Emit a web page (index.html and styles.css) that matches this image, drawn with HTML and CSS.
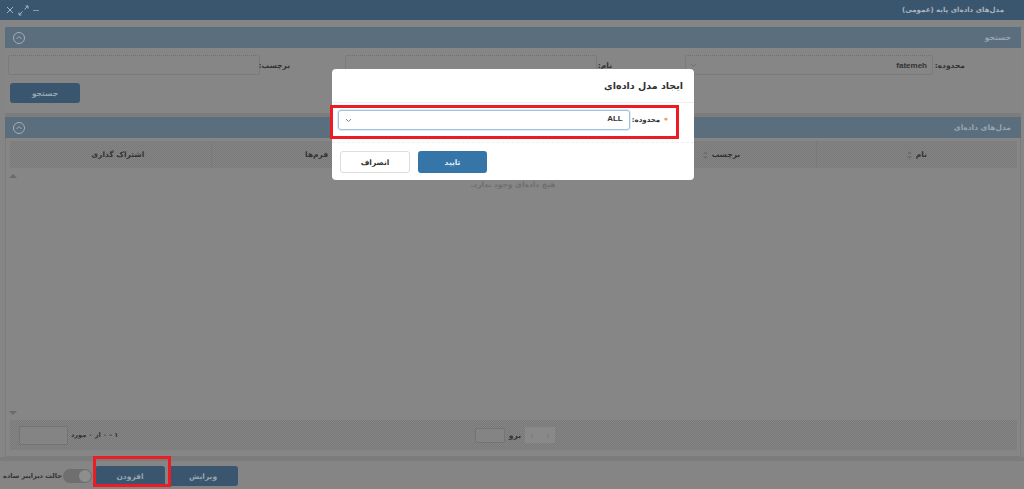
FILE: index.html
```html
<!DOCTYPE html>
<html lang="fa" dir="rtl">
<head>
<meta charset="utf-8">
<title>مدل‌های داده‌ای پایه</title>
<link rel="stylesheet" href="styles.css">
</head>
<body>
<div class="app">
  <header class="titlebar">
    <span class="title">مدل‌های داده‌ای پایه (عمومی)</span>
    <div class="winctl">
      <svg width="9" height="9" viewBox="0 0 9 9"><path d="M1 4.500h6" stroke="#8b9aa8" stroke-width="1"/></svg>
      <svg width="11" height="11" viewBox="0 0 11 11" fill="none" stroke="#a9b4be" stroke-width="1"><path d="M6.500 4.500 10 1M7.500 1H10V3.500M4.500 6.500 1 10M1 7.500V10H3.500"/></svg>
      <svg width="9" height="9" viewBox="0 0 9 9" fill="none" stroke="#a9b4be" stroke-width="1"><path d="M1 1l6 6M7 1l-6 6"/></svg>
    </div>
  </header>

  <section class="panel search">
    <div class="panel-head">
      <span>جستجو</span>
      <svg class="collapse" width="14" height="14" viewBox="0 0 14 14" fill="none" stroke="#a3aeb8"><circle cx="7" cy="7" r="5.500"/><path d="M4.500 8 7 5.500 9.500 8"/></svg>
    </div>
    <div class="panel-body search-body">
      <div class="fields">
        <div class="field f-scope">
          <label>محدوده:</label>
          <div class="input"><span class="val">fatemeh</span><svg width="7" height="5" viewBox="0 0 7 5" fill="none" stroke="#6f6f6f"><path d="M1 1l2.500 2.500L6 1"/></svg></div>
        </div>
        <div class="field f-name">
          <label>نام:</label>
          <div class="input"></div>
        </div>
        <div class="field f-tag">
          <label>برچسب:</label>
          <div class="input"></div>
        </div>
      </div>
      <div class="search-actions"><button class="btn dark">جستجو</button></div>
    </div>
  </section>

  <section class="panel models">
    <div class="panel-head">
      <span>مدل‌های داده‌ای</span>
      <svg class="collapse" width="14" height="14" viewBox="0 0 14 14" fill="none" stroke="#a3aeb8"><circle cx="7" cy="7" r="5.500"/><path d="M4.500 8 7 5.500 9.500 8"/></svg>
    </div>
    <div class="panel-body table-body">
      <div class="thead">
        <div class="th"><span>نام</span><svg width="5" height="8" viewBox="0 0 5 8" fill="#6e6e6e"><path d="M2.500 0 5 3H0zM2.500 8 0 5h5z"/></svg></div>
        <div class="th th-tag"><span>برچسب</span><svg width="5" height="8" viewBox="0 0 5 8" fill="#6e6e6e"><path d="M2.500 0 5 3H0zM2.500 8 0 5h5z"/></svg></div>
        <div class="th"></div>
        <div class="th th-forms"><span>فرم‌ها</span></div>
        <div class="th th-share"><span>اشتراک گذاری</span></div>
      </div>
      <div class="tbody">
        <div class="scrollcol"><i class="up"></i><i class="down"></i></div>
        <p class="empty">هیچ داده‌ای وجود ندارد.</p>
      </div>
      <div class="pager">
        <div class="pager-go">
          <span class="nav">‹&nbsp;&nbsp;&nbsp;&nbsp;›</span>
          <span class="go">برو</span>
          <span class="pgbox"></span>
        </div>
        <div class="pager-count">
          <span>۱ - ۰ از ۰ مورد</span>
          <span class="pgbox size"></span>
        </div>
      </div>
    </div>
  </section>

  <footer class="bottombar">
    <button class="btn dark">ویرایش</button>
    <button class="btn dark">افزودن</button>
    <span class="toggle"><i></i></span>
    <span class="toggle-label">حالت دیزاینر ساده</span>
  </footer>
</div>

<div class="redbox red-add"></div>

<div class="modal">
  <div class="modal-head">ایجاد مدل داده‌ای</div>
  <div class="modal-body">
    <span class="req">*</span>
    <label>محدوده:</label>
    <div class="select">
      <span>ALL</span>
      <svg width="7" height="5" viewBox="0 0 7 5" fill="none" stroke="#888"><path d="M1 1l2.500 2.500L6 1"/></svg>
    </div>
  </div>
  <div class="modal-foot">
    <button class="btn primary">تایید</button>
    <button class="btn ghost">انصراف</button>
  </div>
</div>
<div class="redbox red-scope"></div>
</body>
</html>
```
FILE: styles.css
```css
* { box-sizing: border-box; }
html, body { margin: 0; height: 489px; overflow: hidden; }
body {
  background: #858585;
  font-family: "DejaVu Sans", "Noto Sans", sans-serif;
  font-size: 7.500px;
  color: #2e2e2e;
  position: relative;
}
.app { display: flex; flex-direction: column; height: 489px; }

.titlebar {
  height: 20px;
  background: #3a566f;
  display: flex;
  align-items: center;
  justify-content: space-between;
  padding: 0 20px 0 6px;
  color: #a9b4be;
  font-weight: bold;
  flex: none;
}
.title { font-size: 7px; }
.winctl { display: flex; align-items: center; gap: 3px; }

.panel { margin: 0 3px 0 5px; flex: none; }
.panel-head {
  height: 21px;
  background: #5a6e7e;
  color: #98a5b0;
  display: flex;
  align-items: center;
  justify-content: space-between;
  padding: 0 10px 0 7px;
  font-weight: bold;
}
.panel-body { background: #868686; }

.search { margin-top: 7px; }
.search-body { height: 65px; padding: 7px 3px 0; }
.fields { display: flex; height: 20px; align-items: center; }
.field { display: flex; align-items: center; height: 20px; }
.field label { font-weight: bold; color: #333; white-space: nowrap; flex: none; }
.input {
  flex: 1;
  height: 20px;
  border: 1px dotted #707070;
  border-radius: 3px;
  display: flex;
  align-items: center;
  justify-content: space-between;
  padding: 0 5px 0 4px;
}
.val { font-family: "Liberation Sans", sans-serif; font-weight: bold; color: #333; font-size: 8px; }
.f-scope { width: 333px; }
.f-scope label { width: 85px; padding-right: 53px; }
.f-name { width: 340px; }
.f-name label { width: 88px; padding-right: 73px; }
.f-tag { flex: 1; }
.f-tag label { width: 85px; padding-right: 55px; }
.search-actions { margin-top: 8px; display: flex; justify-content: flex-end; padding-left: 2px; }

.btn {
  width: 70px;
  height: 20px;
  border-radius: 3px;
  border: 0;
  font: bold 7.500px "DejaVu Sans", sans-serif;
  padding: 0;
}
.btn.dark { background: #3a566f; color: #98a5b0; }
.btn.primary { background: #3575a8; color: #e4edf4; width: 69px; }
.btn.ghost { background: #fff; border: 1px solid #ddd; color: #333; }

.models { margin-top: 4px; box-shadow: 0 -4px 0 #7c7c7c; }
.table-body {
  height: 319px;
  display: flex;
  flex-direction: column;
  border: solid #7c7c7c;
  border-width: 0 1px 1px;
}
.thead {
  height: 27px;
  margin: 3px 3px 0 4px;
  display: grid;
  grid-template-columns: repeat(5, 1fr);
  background: conic-gradient(#787878 25%, #868686 0 50%, #787878 0 75%, #868686 0) 0 0 / 2px 2px;
  flex: none;
}
.th {
  display: flex;
  align-items: center;
  justify-content: center;
  gap: 4px;
  font-weight: bold;
  color: #333;
  border-left: 1px solid #7a7a7a;
}
.th-tag { padding-left: 12px; }
.th-forms { padding-left: 8px; }
.th-share { border-left: 0; padding-left: 14px; }
.tbody { flex: 1; position: relative; display: block; }
.scrollcol {
  position: absolute;
  left: 3px;
  top: 6px;
  bottom: 5px;
  display: flex;
  flex-direction: column;
  justify-content: space-between;
}
.up { width: 0; height: 0; border: 4px solid transparent; border-top: 0; border-bottom: 4px solid #6b6b6b; }
.down { width: 0; height: 0; border: 4px solid transparent; border-bottom: 0; border-top: 4px solid #6b6b6b; }
.empty { margin: 12px 0 0; text-align: center; color: #6f6f6f; font-weight: bold; }

.pager {
  height: 30px;
  flex: none;
  margin: 0 3px 6px 4px;
  display: flex;
  justify-content: space-between;
  align-items: center;
  background: conic-gradient(#787878 25%, #868686 0 50%, #787878 0 75%, #868686 0) 0 0 / 2px 2px;
  padding: 0 462px 0 9px;
}
.pager-go, .pager-count { display: flex; align-items: center; }
.pager-go { gap: 4px; }
.pager-count { gap: 3px; font-weight: bold; color: #333; font-size: 6.500px; }
.nav { background: #898989; color: #777; width: 30px; height: 16px; display: flex; align-items: center; justify-content: center; font-size: 10px; }
.go { font-weight: bold; color: #333; }
.pgbox { width: 30px; height: 15px; border: 1px solid #747474; border-radius: 2px; display: block; background: #848484; flex: none; }
.pgbox.size { width: 49px; height: 19px; }

.bottombar {
  flex: 1;
  display: flex;
  align-items: center;
  gap: 3px;
  border-top: 4px solid #7c7c7c;
  padding: 2px 786px 0 0;
}
.bottombar .btn { flex: none; }
.toggle {
  width: 29px;
  height: 14px;
  background: #6f6f6f;
  border-radius: 7px;
  position: relative;
  flex: none;
}
.toggle i { position: absolute; left: 16px; top: 1px; width: 12px; height: 12px; border-radius: 50%; background: #8e8e8e; }
.toggle-label { font-weight: bold; color: #333; white-space: nowrap; font-size: 6.600px; margin-right: -2px; }

.modal {
  position: absolute;
  left: 332px;
  top: 69px;
  width: 362px;
  height: 111px;
  background: #fff;
  border-radius: 4px;
  display: flex;
  flex-direction: column;
  color: #333;
}
.modal-head {
  height: 34px;
  padding: 0 11px;
  display: flex;
  align-items: center;
  font-size: 9.500px;
  font-weight: bold;
  border-bottom: 1px solid #f0f0f0;
  flex: none;
}
.modal-body {
  height: 40px;
  display: flex;
  align-items: center;
  padding: 0 26px 5px 6px;
  gap: 2px;
  border-bottom: 1px dashed #eee;
  flex: none;
  font-weight: bold;
}
.req { color: #f0883a; margin-left: 2px; }
.modal-body label { white-space: nowrap; font-size: 7px; }
.select {
  flex: 1;
  height: 20px;
  border: 1px solid #9fc2e0;
  border-radius: 3px;
  box-shadow: 0 0 0 1px #e0ecf6;
  display: flex;
  align-items: center;
  justify-content: space-between;
  padding: 0 6px 4px 6px;
  font-family: "Liberation Sans", sans-serif;
  font-weight: bold;
  font-size: 8px;
}
.select svg { margin-top: 4px; }
.modal-foot {
  flex: 1;
  display: flex;
  gap: 8px;
  align-items: center;
  padding: 1px 207px 0 0;
}
.modal-foot .btn { height: 22px; flex: none; }

.redbox { position: absolute; border: 3px solid #ed1c24; pointer-events: none; }
.red-scope { left: 330px; top: 105px; width: 349px; height: 34px; }
.red-add { left: 93px; top: 456px; width: 78px; height: 31px; }
```
